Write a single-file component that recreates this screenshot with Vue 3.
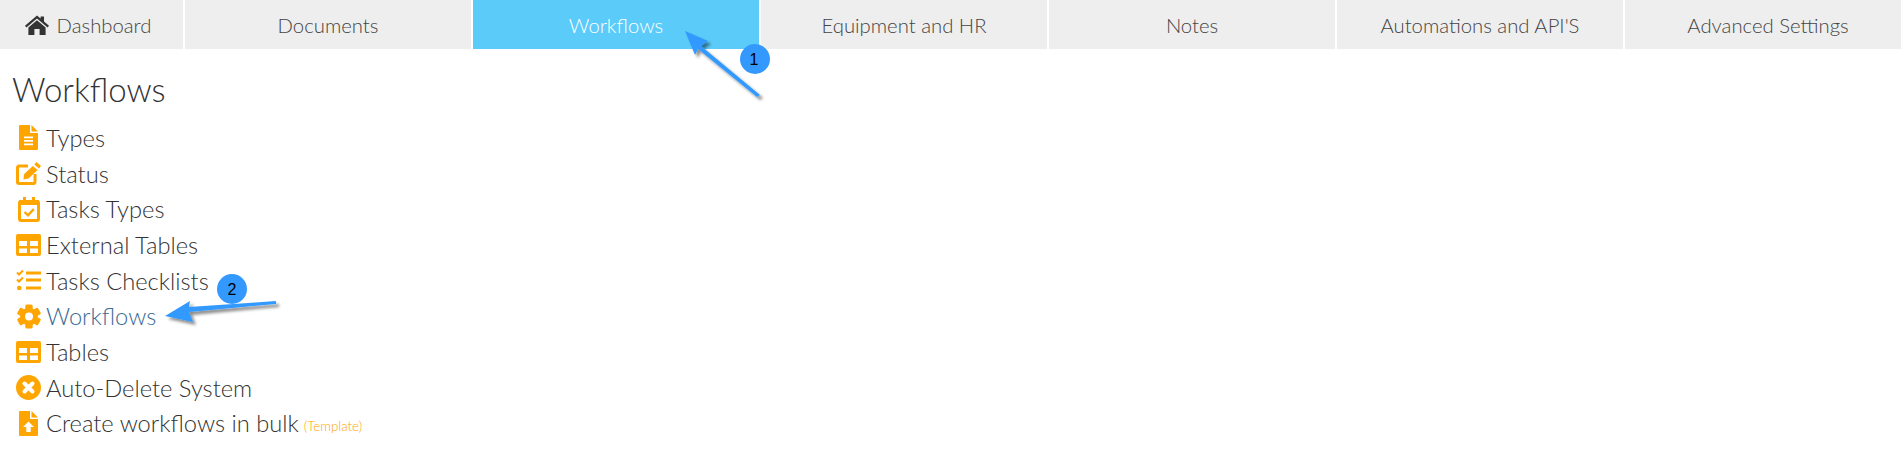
<script setup>
const tabs = [
  { label: 'Dashboard', home: true },
  { label: 'Documents' },
  { label: 'Workflows', active: true },
  { label: 'Equipment and HR' },
  { label: 'Notes' },
  { label: "Automations and API'S" },
  { label: 'Advanced Settings' },
]

const links = [
  { label: 'Types', icon: 'file' },
  { label: 'Status', icon: 'edit' },
  { label: 'Tasks Types', icon: 'calendar' },
  { label: 'External Tables', icon: 'table' },
  { label: 'Tasks Checklists', icon: 'checklist' },
  { label: 'Workflows', icon: 'cog', current: true },
  { label: 'Tables', icon: 'table' },
  { label: 'Auto-Delete System', icon: 'times' },
  { label: 'Create workflows in bulk', icon: 'upload', note: '(Template)' },
]
</script>

<template>
  <div class="page">
    <nav class="tabs">
      <a v-for="tab in tabs" :key="tab.label" class="tab" :class="{ active: tab.active, first: tab.home }">
        <svg v-if="tab.home" class="home" viewBox="0 0 24 20">
          <path fill="#333" d="M12 0.5 L15.6 3.6 V1.6 H19 V6.5 L24 10.8 L22.6 12.4 L12 3.4 L1.4 12.4 L0 10.8 Z" />
          <path fill="#333" d="M12 5.2 L20.6 12.4 V20 H14.6 V14 H9.4 V20 H3.4 V12.4 Z" />
        </svg>
        {{ tab.label }}
      </a>
    </nav>

    <main class="content">
      <h1>Workflows</h1>
      <ul class="links">
        <li v-for="(link, i) in links" :key="i" :class="{ current: link.current }">
          <span class="icon">
            <svg v-if="link.icon === 'file'" width="19" height="25" viewBox="0 0 19 25">
              <path fill="#ffa500" d="M1 0 H11 V8 H19 V24 a1 1 0 0 1 -1 1 H1 a1 1 0 0 1 -1 -1 V1 a1 1 0 0 1 1 -1 Z M12.5 0 L19 6.5 H12.5 Z" />
              <path fill="#fff" d="M5 11.5 H14 V13.2 H5 Z M5 15 H14 V16.7 H5 Z M5 18.5 H14 V20.2 H5 Z" />
            </svg>
            <svg v-else-if="link.icon === 'edit'" width="25" height="23" viewBox="0 0 25 23">
              <path fill="none" stroke="#ffa500" stroke-width="3" stroke-linejoin="round" d="M12 4 H3 A1.5 1.5 0 0 0 1.500 5.500 V20 A1.500 1.500 0 0 0 3 21.500 H17.500 A1.500 1.500 0 0 0 19 20 V12" />
              <path fill="#ffa500" d="M20.500 0 L25 4 L23 6.400 L18.300 2.400 Z M16.800 4 L21.600 8 L12.500 16.500 L7.500 17.500 L8 12.300 Z" />
            </svg>
            <svg v-else-if="link.icon === 'calendar'" width="22" height="25" viewBox="0 0 22 25">
              <rect x="1.500" y="4.500" width="19" height="19" rx="1.500" fill="none" stroke="#ffa500" stroke-width="3" />
              <path fill="#ffa500" d="M1 3 H21 V8 H1 Z M5 0 H8 V5 H5 Z M14 0 H17 V5 H14 Z" />
              <path fill="none" stroke="#ffa500" stroke-width="2.400" d="M6.500 15 L10 18.300 L15.800 12" />
            </svg>
            <svg v-else-if="link.icon === 'table'" width="25" height="22" viewBox="0 0 25 22">
              <path fill="#ffa500" fill-rule="evenodd" d="M2 0 H23 A2 2 0 0 1 25 2 V20 A2 2 0 0 1 23 22 H2 A2 2 0 0 1 0 20 V2 A2 2 0 0 1 2 0 Z M3 7 V12 H11 V7 Z M14 7 V12 H22 V7 Z M3 14.500 V19 H11 V14.500 Z M14 14.500 V19 H22 V14.500 Z" />
            </svg>
            <svg v-else-if="link.icon === 'checklist'" width="25" height="21" viewBox="0 0 25 21">
              <path fill="none" stroke="#ffa500" stroke-width="2" d="M1 2.500 L3 4.500 L7 0.500 M1 9.500 L3 11.500 L7 7.500" />
              <circle cx="3.300" cy="18" r="2.300" fill="#ffa500" />
              <path fill="#ffa500" d="M10 1.500 H25 V4.500 H10 Z M10 8.500 H25 V11.500 H10 Z M10 16.500 H25 V19.500 H10 Z" />
            </svg>
            <svg v-else-if="link.icon === 'cog'" width="24" height="25" viewBox="0 0 24 24">
              <g fill="#ffa500">
                <rect v-for="a in [0, 60, 120]" :key="a" x="8.300" y="0" width="7.400" height="24" rx="1.500" :transform="`rotate(${a} 12 12)`" />
                <circle cx="12" cy="12" r="8.800" />
              </g>
              <circle cx="12" cy="12" r="4" fill="#fff" />
            </svg>
            <svg v-else-if="link.icon === 'times'" width="25" height="25" viewBox="0 0 25 25">
              <circle cx="12.500" cy="12.500" r="12.500" fill="#ffa500" />
              <path stroke="#fff" stroke-width="4" stroke-linecap="round" d="M8.500 8.500 L16.500 16.500 M16.500 8.500 L8.500 16.500" />
            </svg>
            <svg v-else width="19" height="25" viewBox="0 0 19 25">
              <path fill="#ffa500" d="M1 0 H11 V8 H19 V24 a1 1 0 0 1 -1 1 H1 a1 1 0 0 1 -1 -1 V1 a1 1 0 0 1 1 -1 Z M12.500 0 L19 6.500 H12.500 Z" />
              <path fill="#fff" d="M9.500 10.500 L15 16 H11.700 V21 H7.300 V16 H4 Z" />
            </svg>
          </span>
          <span class="text">{{ link.label }}</span>
          <small v-if="link.note">{{ link.note }}</small>
        </li>
      </ul>
    </main>

    <!-- annotations drawn over the page -->
    <svg class="marks" width="1901" height="472" viewBox="0 0 1901 472">
      <defs>
        <filter id="arrow-shadow" x="-20%" y="-20%" width="140%" height="140%">
          <feDropShadow dx="3" dy="3" stdDeviation="1.500" flood-color="#000" flood-opacity="0.450" />
        </filter>
      </defs>
      <g fill="#3399ff" filter="url(#arrow-shadow)">
        <path d="M685 31 L708 41 L701 46 L760 95 L757 97 L698 49 L695 55 Z" />
        <path d="M165 316 L190 301 L189 307 L276 301 L276 304 L189 312 L193 322 Z" />
      </g>
      <circle cx="755" cy="59" r="15" fill="#3399ff" />
      <circle cx="232" cy="289" r="15" fill="#3399ff" />
      <text x="754" y="65" class="num">1</text>
      <text x="232" y="295" class="num">2</text>
    </svg>
  </div>
</template>

<style scoped>
.page {
  position: relative;
  width: 1901px;
  height: 472px;
  overflow: hidden;
  background: #fff;
  color: #333;
  font-family: Lato, "Open Sans", sans-serif;
  font-weight: 300;
}

.tabs {
  display: grid;
  grid-template-columns: 183px repeat(6, 286px);
  column-gap: 2px;
  height: 49px;
}

.tab {
  display: flex;
  align-items: center;
  justify-content: center;
  gap: 8px;
  background: #eee;
  font-size: 20.300px;
  color: #444;
}

.tab.first {
  padding-right: 7px;
}

.tab.active {
  background: #5bcbf9;
  color: #fff;
}

.home {
  width: 24px;
  height: 20px;
}

.content {
  padding: 15px 0 0 12px;
}

h1 {
  margin: 0;
  height: 50px;
  font-size: 33px;
  font-weight: 300;
  line-height: 50px;
}

.links {
  list-style: none;
  margin: 6px 0 0;
  padding: 0 0 0 4px;
}

.links li {
  display: flex;
  align-items: center;
  height: 35.700px;
  font-size: 23.700px;
  white-space: nowrap;
}

.icon {
  display: flex;
  align-items: center;
  justify-content: center;
  width: 25px;
  margin-right: 5px;
}

.current .text {
  color: #3b6a94;
}

small {
  margin: 6px 0 0 5px;
  font-size: 13.300px;
  color: #ffa500;
}

.marks {
  position: absolute;
  top: 0;
  left: 0;
}

.num {
  font-family: "Liberation Sans", sans-serif;
  font-size: 16px;
  font-weight: 400;
  text-anchor: middle;
  fill: #000;
}
</style>
